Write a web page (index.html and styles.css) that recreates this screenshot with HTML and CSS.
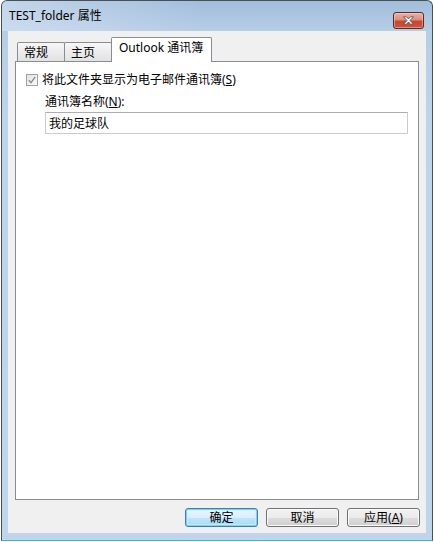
FILE: index.html
```html
<!DOCTYPE html>
<html lang="zh-CN">
<head>
<meta charset="utf-8">
<title>TEST_folder 属性</title>
<link rel="stylesheet" href="styles.css">
</head>
<body>
<div class="window">
  <div class="titlebar">
    <span class="title">TEST_folder 属性</span>
    <button class="close" aria-label="关闭">
      <svg width="13" height="9" viewBox="0 0 13 9">
        <path d="M1.5 0.8 H4.5 L6.5 3 L8.5 0.8 H11.5 L8 4.5 L11.5 8.2 H8.5 L6.5 6 L4.5 8.2 H1.5 L5 4.5 Z" fill="#ffffff" stroke="#6b3a33" stroke-width="0.8" stroke-linejoin="round"/>
      </svg>
    </button>
  </div>
  <div class="content">
    <div class="tabs">
      <div class="tab tab-first">常规</div>
      <div class="tab">主页</div>
      <div class="tab tab-active">Outlook 通讯簿</div>
    </div>
    <div class="panel">
      <div class="check-row">
        <span class="checkbox">
          <svg width="8" height="8" viewBox="0 0 8 8"><path d="M0.8 4.2 L3 6.6 L7.2 0.8" fill="none" stroke="#8c8c8c" stroke-width="1.4"/></svg>
        </span>
        <span class="check-label">将此文件夹显示为电子邮件通讯簿(<u>S</u>)</span>
      </div>
      <label class="field-label" for="abname">通讯簿名称(<u>N</u>):</label>
      <input id="abname" class="textbox" type="text" value="我的足球队">
    </div>
    <div class="buttons">
      <button class="btn btn-default">确定</button>
      <button class="btn">取消</button>
      <button class="btn">应用(<u>A</u>)</button>
    </div>
  </div>
</div>
</body>
</html>
```

FILE: styles.css
```css
html, body {
  margin: 0;
  padding: 0;
  background: #ffffff;
}

body {
  font-family: "Noto Sans", "Noto Sans CJK SC", sans-serif;
  font-size: 12px;
  color: #000000;
}

.window {
  box-sizing: border-box;
  margin-left: 1px;
  width: 432px;
  height: 541px;
  border: 1px solid #4a4f57;
  border-bottom-color: #2cc0d4;
  border-radius: 6px 6px 0 0;
  background: linear-gradient(to bottom, #a2bedb 0px, #b6cde6 30px, #bed4eb 120px, #bfd5ec 100%);
  padding: 0 6px 7px 6px;
  display: flex;
  flex-direction: column;
}

.titlebar {
  height: 30px;
  margin: 0 -6px;
  padding: 0 8px 0 7px;
  display: flex;
  justify-content: space-between;
  align-items: flex-start;
  border-radius: 5px 5px 0 0;
  background: linear-gradient(to right, rgba(220, 232, 245, 0.55) 0px, rgba(220, 232, 245, 0) 200px);
}

.title {
  padding-top: 7px;
  line-height: 16px;
  font-size: 12px;
  color: #000000;
}

.close {
  margin-top: 11px;
  box-sizing: border-box;
  width: 31px;
  height: 17px;
  padding: 0;
  border: 1px solid #5a2923;
  border-radius: 3px;
  background: linear-gradient(to bottom, #e9b3a6 0%, #dc8d7b 45%, #c8472f 55%, #c7553d 100%);
  box-shadow: inset 0 0 0 1px rgba(255, 220, 210, 0.45);
  display: flex;
  align-items: center;
  justify-content: center;
}

.close svg {
  display: block;
}

.content {
  flex: 1;
  background: #f0f0f0;
  padding: 6px 6px 6px 7px;
  display: flex;
  flex-direction: column;
}

.tabs {
  height: 24px;
  display: flex;
  align-items: flex-end;
  padding-left: 2px;
}

.tab {
  box-sizing: border-box;
  height: 19px;
  width: 48px;
  margin-left: -1px;
  padding: 2px 0 0 6px;
  line-height: 16px;
  border: 1px solid #898c95;
  border-bottom: none;
  border-radius: 2px 2px 0 0;
  background: linear-gradient(to bottom, #f7f7f7 0%, #ececec 50%, #e2e2e2 100%);
  white-space: nowrap;
}

.tab-first {
  margin-left: 0;
}

.tab-active {
  position: relative;
  z-index: 1;
  width: auto;
  height: 25px;
  margin-bottom: -1px;
  padding: 2px 8px 0 7px;
  background: #ffffff;
}

.panel {
  flex: 1;
  box-sizing: border-box;
  margin-right: 1px;
  background: #ffffff;
  border: 1px solid #898c95;
  padding: 10px 9px 0 10px;
  display: flex;
  flex-direction: column;
  align-items: flex-start;
}

.check-row {
  display: flex;
  align-items: center;
  height: 16px;
  line-height: 16px;
}

.checkbox {
  box-sizing: border-box;
  width: 12px;
  height: 12px;
  border: 1px solid #a3a3a3;
  background: linear-gradient(to bottom right, #e4e4e4, #fbfbfb);
  display: flex;
  align-items: center;
  justify-content: center;
  margin-right: 4px;
}

.checkbox svg {
  display: block;
}

.check-label {
  white-space: nowrap;
}

.field-label {
  margin: 6px 0 0 19px;
  line-height: 16px;
}

.textbox {
  box-sizing: border-box;
  margin: 2px 0 0 19px;
  width: 363px;
  height: 22px;
  padding: 0 3px;
  border: 1px solid #c9ccd3;
  border-top-color: #abadb3;
  font-family: "Noto Sans", "Noto Sans CJK SC", sans-serif;
  font-size: 12px;
  color: #000000;
  background: #ffffff;
  outline: none;
}

.buttons {
  margin-top: 8px;
  display: flex;
  justify-content: flex-end;
  gap: 8px;
}

.btn {
  box-sizing: border-box;
  width: 73px;
  height: 19px;
  padding: 0;
  border: 1px solid #707070;
  border-radius: 3px;
  background: linear-gradient(to bottom, #f2f2f2 0%, #ebebeb 50%, #dddddd 51%, #cfcfcf 100%);
  box-shadow: inset 0 0 0 1px #fbfbfb;
  font-family: "Noto Sans", "Noto Sans CJK SC", sans-serif;
  font-size: 12px;
  line-height: 15px;
  color: #000000;
}

.btn-default {
  border-color: #3c7fb1;
  background: linear-gradient(to bottom, #e9f6fd 0%, #d8effc 50%, #bfe5fb 51%, #a9daf6 100%);
  box-shadow: inset 0 0 0 1px #7fd0f5, inset 0 0 0 2px rgba(200, 240, 255, 0.7);
}
```
